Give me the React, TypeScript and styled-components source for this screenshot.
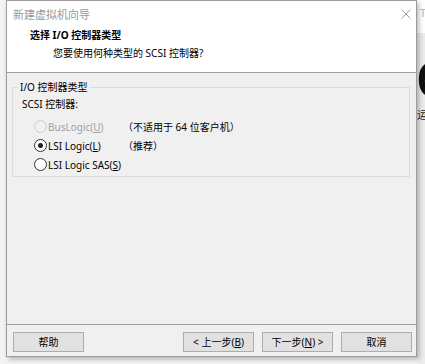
import styled, { createGlobalStyle } from "styled-components";

const GlobalStyle = createGlobalStyle`
  html, body {
    margin: 0;
    padding: 0;
    background: #f3f3f3;
  }
  * {
    box-sizing: border-box;
  }
`;

const Desktop = styled.div`
  position: relative;
  width: 425px;
  height: 364px;
  overflow: hidden;
  padding-left: 6px;
  display: flex;
  align-items: flex-start;
  font-family: "Noto Sans", "Noto Sans CJK SC", sans-serif;
  font-size: 10px;
  color: #000;
`;

// window peeking out behind the dialog
const BackWindow = styled.div`
  position: absolute;
  left: 417px;
  top: 0;
  width: 40px;
  height: 364px;
  display: flex;
  flex-direction: column;
  background: #ececec;
`;

const BackTop = styled.div`
  height: 33px;
  background: #fff;
  padding: 6px 0 0 3px;
  color: #8fc6e6;
  font-size: 11px;
  line-height: 14px;
`;

const BackGlyph = styled.div`
  font-family: "Liberation Sans", sans-serif;
  font-size: 66px;
  line-height: 50px;
  height: 50px;
  overflow: hidden;
  margin-left: -1px;
  margin-top: 16px;
  color: #111;
`;

const BackLabel = styled.div`
  font-size: 11px;
  line-height: 14px;
  margin-top: 9px;
  color: #222;
`;

const Dialog = styled.div`
  position: relative;
  z-index: 1;
  width: 411px;
  height: 357px;
  border: 1px solid #9c9c9c;
  background: #f0f0f0;
  display: flex;
  flex-direction: column;
  box-shadow: 2px 2px 5px rgba(0, 0, 0, 0.28);
`;

const TitleBar = styled.div`
  height: 25px;
  display: flex;
  align-items: center;
  justify-content: space-between;
  padding: 0 5px 0 6px;
  background: #fff;
  color: #999;
  font-size: 11px;
`;

const CloseIcon = () => (
  <svg width="10" height="10" viewBox="0 0 10 10">
    <path d="M0.5 0.5 L9.5 9.5 M9.5 0.5 L0.5 9.5" stroke="#a0a0a0" strokeWidth="1" />
  </svg>
);

const Header = styled.div`
  height: 47px;
  background: #fff;
  border-bottom: 1px solid #a0a0a0;
  padding: 2px 0 0 23px;
  display: flex;
  flex-direction: column;
  gap: 4px;
`;

const Heading = styled.div`
  font-weight: bold;
  line-height: 14px;
`;

const SubHeading = styled.div`
  line-height: 14px;
  padding-left: 23px;
`;

const Body = styled.div`
  flex: 1;
  padding: 7px 6px 0 5px;
`;

const GroupBox = styled.fieldset`
  margin: 0;
  border: 1px solid #dcdcdc;
  padding: 3px 0 2px 5px;
`;

const Legend = styled.legend`
  padding: 0 2px;
  line-height: 14px;
`;

const FieldLabel = styled.div`
  line-height: 14px;
  padding-left: 4px;
`;

const OptionList = styled.div`
  margin-top: 6px;
  padding-left: 16px;
  display: grid;
  grid-template-columns: 89px auto;
  grid-auto-rows: 19px;
  align-items: center;
`;

const Option = styled.label<{ $disabled?: boolean }>`
  display: flex;
  align-items: center;
  gap: 1px;
  color: ${(p) => (p.$disabled ? "#a0a0a0" : "#000")};
`;

const Note = styled.span`
  line-height: 14px;
`;

const RadioMark = styled.span<{ $checked?: boolean; $disabled?: boolean }>`
  width: 13px;
  height: 13px;
  border-radius: 50%;
  border: 1px solid ${(p) => (p.$disabled ? "#cccccc" : "#333")};
  background: ${(p) => (p.$disabled ? "#f0f0f0" : "#fff")};
  display: flex;
  align-items: center;
  justify-content: center;
  &::after {
    content: "";
    display: ${(p) => (p.$checked ? "block" : "none")};
    width: 5px;
    height: 5px;
    border-radius: 50%;
    background: #222;
  }
`;

const Footer = styled.div`
  border-top: 1px solid #a0a0a0;
  padding: 7px 4px 4px 6px;
  display: flex;
  gap: 8px;
`;

const Button = styled.button<{ $apart?: boolean }>`
  width: 71px;
  height: 20px;
  margin-right: ${(p) => (p.$apart ? "auto" : "0")};
  border: 1px solid #adadad;
  background: #e1e1e1;
  font-family: inherit;
  font-size: 10px;
  color: #000;
  padding: 0;
  line-height: 18px;
`;

export default function App() {
  return (
    <>
      <GlobalStyle />
      <Desktop>
        <BackWindow>
          <BackTop>T</BackTop>
          <BackGlyph>e</BackGlyph>
          <BackLabel>运</BackLabel>
        </BackWindow>
        <Dialog>
          <TitleBar>
            <span>新建虚拟机向导</span>
            <CloseIcon />
          </TitleBar>
          <Header>
            <Heading>选择 I/O 控制器类型</Heading>
            <SubHeading>您要使用何种类型的 SCSI 控制器?</SubHeading>
          </Header>
          <Body>
            <GroupBox>
              <Legend>I/O 控制器类型</Legend>
              <FieldLabel>SCSI 控制器:</FieldLabel>
              <OptionList>
                <Option $disabled>
                  <RadioMark $disabled />
                  <span>
                    BusLogic(<u>U</u>)
                  </span>
                </Option>
                <Note>（不适用于 64 位客户机）</Note>
                <Option>
                  <RadioMark $checked />
                  <span>
                    LSI Logic(<u>L</u>)
                  </span>
                </Option>
                <Note>（推荐）</Note>
                <Option>
                  <RadioMark />
                  <span>
                    LSI Logic SAS(<u>S</u>)
                  </span>
                </Option>
                <span />
              </OptionList>
            </GroupBox>
          </Body>
          <Footer>
            <Button $apart>帮助</Button>
            <Button>
              &lt; 上一步(<u>B</u>)
            </Button>
            <Button>
              下一步(<u>N</u>) &gt;
            </Button>
            <Button>取消</Button>
          </Footer>
        </Dialog>
      </Desktop>
    </>
  );
}
